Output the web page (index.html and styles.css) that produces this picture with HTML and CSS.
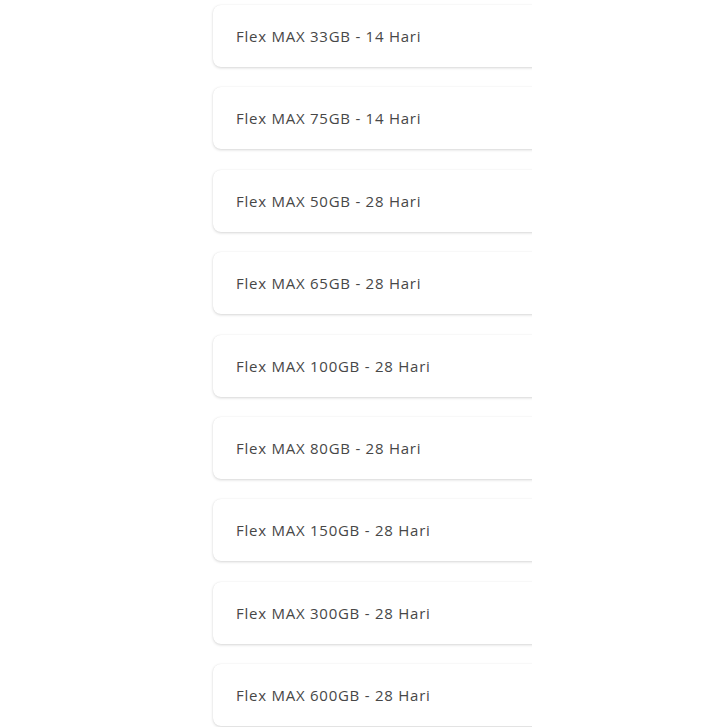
FILE: index.html
```html
<!DOCTYPE html>
<html lang="en">
<head>
    <meta charset="UTF-8">
    <meta name="viewport" content="width=device-width, initial-scale=1.0">
    <title>Paket Flex MAX</title>
    <link rel="stylesheet" href="styles.css">
</head>
<body>
    <!-- Package list -->
    <div class="package-list">
        <div class="package-card">Flex MAX 33GB - 14 Hari</div>
        <div class="package-card">Flex MAX 75GB - 14 Hari</div>
        <div class="package-card">Flex MAX 50GB - 28 Hari</div>
        <div class="package-card">Flex MAX 65GB - 28 Hari</div>
        <div class="package-card">Flex MAX 100GB - 28 Hari</div>
        <div class="package-card">Flex MAX 80GB - 28 Hari</div>
        <div class="package-card">Flex MAX 150GB - 28 Hari</div>
        <div class="package-card">Flex MAX 300GB - 28 Hari</div>
        <div class="package-card">Flex MAX 600GB - 28 Hari</div>
    </div>
</body>
</html>
```

FILE: styles.css
```css
* {
    margin: 0;
    padding: 0;
    box-sizing: border-box;
}

body {
    background: #fff;
    font-family: 'Open Sans', sans-serif;
    height: 727px;
    overflow: hidden;
}

.package-list {
    display: flex;
    flex-direction: column;
    gap: 20.4px;
    width: 327px;
    margin-left: 205px;
    padding: 5px 0 4px 8px;
    overflow: hidden;
}

.package-card {
    width: 360px;
    height: 62px;
    display: flex;
    align-items: center;
    padding-left: 23px;
    background: #fff;
    border-radius: 8px;
    box-shadow: 0 1px 3px rgba(0, 0, 0, 0.16), 0 0 1px rgba(0, 0, 0, 0.08);
    color: #474747;
    font-size: 15px;
    letter-spacing: 0.75px;
    flex-shrink: 0;
}
```
